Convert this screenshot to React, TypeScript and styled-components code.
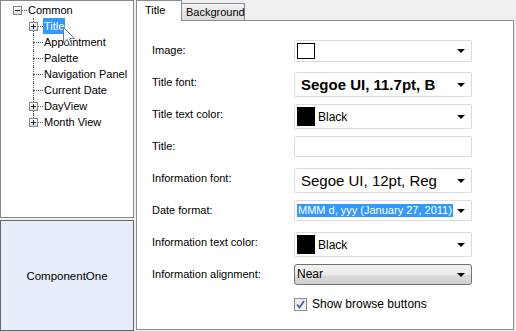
import React from 'react'
import styled, { createGlobalStyle, css } from 'styled-components'

const GlobalStyle = createGlobalStyle`
  body {
    margin: 0;
    background: #f0f0f0;
    font-family: "Liberation Sans", Arial, sans-serif;
    font-size: 11px;
    color: #000;
  }
`

const Window = styled.div`
  display: flex;
  width: 516px;
  height: 331px;
  background: #f0f0f0;
  overflow: hidden;
`

const LeftColumn = styled.div`
  display: flex;
  flex-direction: column;
  gap: 2px;
  width: 134px;
  flex-shrink: 0;
`

const TreeBox = styled.div`
  position: relative;
  height: 218px;
  box-sizing: border-box;
  border: 1px solid #828790;
  background: #fff;
  padding: 1px 0 0 8px;
`

const LogoBox = styled.div`
  height: 111px;
  box-sizing: border-box;
  border: 1px solid #646464;
  background: #e6eefc;
  display: flex;
  align-items: center;
  justify-content: center;
  font-size: 11.5px;
`

const TreeRow = styled.div`
  display: flex;
  align-items: center;
  height: 16px;
`

type CellKind = 'root' | 'tee' | 'elbow'

const Cell = styled.div<{ $kind: CellKind }>`
  position: relative;
  width: 16px;
  height: 16px;
  flex-shrink: 0;
  display: flex;
  align-items: center;
  justify-content: center;

  &::after {
    content: '';
    position: absolute;
    left: 8px;
    right: -2px;
    top: 8px;
    border-top: 1px dotted #5a5a5a;
  }

  ${(p) =>
    p.$kind !== 'root' &&
    css`
      &::before {
        content: '';
        position: absolute;
        left: 8px;
        top: 0;
        height: ${p.$kind === 'elbow' ? '8px' : '16px'};
        border-left: 1px dotted #5a5a5a;
      }
    `}
`

const Spacer = styled.div`
  width: 16px;
  height: 16px;
  flex-shrink: 0;
`

const Expander = styled.div<{ $open?: boolean }>`
  position: relative;
  z-index: 1;
  width: 9px;
  height: 9px;
  box-sizing: border-box;
  border: 1px solid #8a8a8a;
  background: linear-gradient(#ffffff, #d8d8d8);
  margin-left: 1px;

  &::before {
    content: '';
    position: absolute;
    left: 1px;
    top: 3px;
    width: 5px;
    height: 1px;
    background: #1b2a4a;
  }

  ${(p) =>
    !p.$open &&
    css`
      &::after {
        content: '';
        position: absolute;
        left: 3px;
        top: 1px;
        width: 1px;
        height: 5px;
        background: #1b2a4a;
      }
    `}
`

const TreeLabel = styled.span<{ $selected?: boolean }>`
  position: relative;
  z-index: 1;
  margin-left: 2px;
  padding: 0 1px;
  height: 16px;
  line-height: 16px;
  white-space: nowrap;
  ${(p) =>
    p.$selected &&
    css`
      background: #3399ff;
      color: #fff;
    `}
`

const Cursor = styled.svg`
  position: absolute;
  left: 62px;
  top: 26px;
  z-index: 2;
`

const TabControl = styled.div`
  display: flex;
  flex-direction: column;
  width: 378px;
  margin-left: 2px;
  height: 330px;
`

const TabStrip = styled.div`
  display: flex;
  height: 20px;
  flex-shrink: 0;
`

const Tab = styled.div<{ $active?: boolean }>`
  box-sizing: border-box;
  border: 1px solid #898c95;
  border-bottom: none;
  padding-left: 8px;
  ${(p) =>
    p.$active
      ? css`
          position: relative;
          z-index: 1;
          width: 46px;
          height: 21px;
          background: #fff;
          line-height: 19px;
        `
      : css`
          width: 64px;
          height: 17px;
          margin-top: 3px;
          margin-left: -1px;
          padding-left: 4px;
          background: linear-gradient(#f3f3f3, #dcdcdc);
          line-height: 17px;
        `}
`

const Panel = styled.div`
  flex: 1;
  box-sizing: border-box;
  border: 1px solid #898c95;
  background: #fff;
  padding: 19px 0 0 15px;
`

const FormRow = styled.div`
  display: grid;
  grid-template-columns: 142px 178px;
  height: 32px;
  align-items: start;
`

const Label = styled.div`
  padding-top: 3px;
  line-height: 14px;
`

const Combo = styled.div<{ $h: number }>`
  position: relative;
  box-sizing: border-box;
  height: ${(p) => p.$h}px;
  border: 1px solid #dcdcdc;
  border-radius: 2px;
  background: #fff;
  display: flex;
  align-items: center;
  padding: 0 20px 0 2px;
  white-space: nowrap;
  overflow: hidden;
`

const Arrow = styled.span`
  position: absolute;
  right: 6px;
  top: 50%;
  margin-top: -2px;
  width: 0;
  height: 0;
  border-left: 4px solid transparent;
  border-right: 4px solid transparent;
  border-top: 4px solid #000;
`

const Swatch = styled.span<{ $fill: string; $h: number }>`
  width: 18px;
  height: ${(p) => p.$h}px;
  box-sizing: border-box;
  border: 1px solid #000;
  background: ${(p) => p.$fill};
  flex-shrink: 0;
`

const FontText = styled.span<{ $bold?: boolean }>`
  font-size: 15px;
  font-weight: ${(p) => (p.$bold ? 700 : 400)};
  padding-left: 4px;
`

const ColorName = styled.span`
  font-size: 12px;
  padding-left: 3px;
`

const Selected = styled.span`
  background: #3399ff;
  color: #fff;
  line-height: 13px;
  padding: 0 1px;
`

const TextBox = styled.div`
  box-sizing: border-box;
  height: 21px;
  border: 1px solid #dcdcdc;
  border-radius: 2px;
  background: #fff;
`

const ButtonCombo = styled.div`
  position: relative;
  box-sizing: border-box;
  height: 21px;
  border: 1px solid #707070;
  border-radius: 3px;
  background: linear-gradient(#f2f2f2 0%, #ebebeb 50%, #dddddd 51%, #cfcfcf 100%);
  padding-left: 2px;
  line-height: 19px;
  font-size: 12px;
`

const CheckRow = styled.label`
  display: flex;
  align-items: center;
  gap: 5px;
  margin-top: 1px;
  font-size: 12px;
`

const CheckBox = styled.span`
  width: 13px;
  height: 13px;
  box-sizing: border-box;
  border: 1px solid #8f8f8f;
  background: linear-gradient(#e8e8e8, #f6f6f6);
  display: flex;
  align-items: center;
  justify-content: center;
`

const treeItems: { text: string; kind: CellKind; expander?: boolean; selected?: boolean }[] = [
  { text: 'Title', kind: 'tee', expander: true, selected: true },
  { text: 'Appointment', kind: 'tee' },
  { text: 'Palette', kind: 'tee' },
  { text: 'Navigation Panel', kind: 'tee' },
  { text: 'Current Date', kind: 'tee' },
  { text: 'DayView', kind: 'tee', expander: true },
  { text: 'Month View', kind: 'elbow', expander: true },
]

const App: React.FC = () => {
  return (
    <Window>
      <GlobalStyle />
      <LeftColumn>
        <TreeBox>
          <TreeRow>
            <Cell $kind="root">
              <Expander $open />
            </Cell>
            <TreeLabel>Common</TreeLabel>
          </TreeRow>
          {treeItems.map((item) => (
            <TreeRow key={item.text}>
              <Spacer />
              <Cell $kind={item.kind}>{item.expander && <Expander />}</Cell>
              <TreeLabel $selected={item.selected}>{item.text}</TreeLabel>
            </TreeRow>
          ))}
          <Cursor width="13" height="20" viewBox="0 0 13 20">
            <path
              d="M0.5 0.5 L0.5 16 L4.2 12.4 L6.8 18.5 L9 17.6 L6.5 11.6 L11.5 11.6 Z"
              fill="#ffffff"
              stroke="#7a7a7a"
              strokeWidth="1"
            />
          </Cursor>
        </TreeBox>
        <LogoBox>ComponentOne</LogoBox>
      </LeftColumn>

      <TabControl>
        <TabStrip>
          <Tab $active>Title</Tab>
          <Tab>Background</Tab>
        </TabStrip>
        <Panel>
          <FormRow>
            <Label>Image:</Label>
            <Combo $h={22}>
              <Swatch $fill="#fff" $h={16} />
              <Arrow />
            </Combo>
          </FormRow>
          <FormRow>
            <Label>Title font:</Label>
            <Combo $h={25}>
              <FontText $bold>Segoe UI, 11.7pt, B</FontText>
              <Arrow />
            </Combo>
          </FormRow>
          <FormRow>
            <Label>Title text color:</Label>
            <Combo $h={25}>
              <Swatch $fill="#000" $h={19} />
              <ColorName>Black</ColorName>
              <Arrow />
            </Combo>
          </FormRow>
          <FormRow>
            <Label>Title:</Label>
            <TextBox />
          </FormRow>
          <FormRow>
            <Label>Information font:</Label>
            <Combo $h={25}>
              <FontText>Segoe UI, 12pt, Reg</FontText>
              <Arrow />
            </Combo>
          </FormRow>
          <FormRow>
            <Label>Date format:</Label>
            <Combo $h={21}>
              <Selected>MMM d, yyy (January 27, 2011)</Selected>
              <Arrow />
            </Combo>
          </FormRow>
          <FormRow>
            <Label>Information text color:</Label>
            <Combo $h={25}>
              <Swatch $fill="#000" $h={19} />
              <ColorName>Black</ColorName>
              <Arrow />
            </Combo>
          </FormRow>
          <FormRow>
            <Label>Information alignment:</Label>
            <ButtonCombo>
              Near
              <Arrow />
            </ButtonCombo>
          </FormRow>
          <FormRow>
            <span />
            <CheckRow>
              <CheckBox>
                <svg width="9" height="9" viewBox="0 0 9 9">
                  <path d="M1 4.5 L3.5 7.5 L8 1" fill="none" stroke="#4c62a0" strokeWidth="1.8" />
                </svg>
              </CheckBox>
              Show browse buttons
            </CheckRow>
          </FormRow>
        </Panel>
      </TabControl>
    </Window>
  )
}

export default App
